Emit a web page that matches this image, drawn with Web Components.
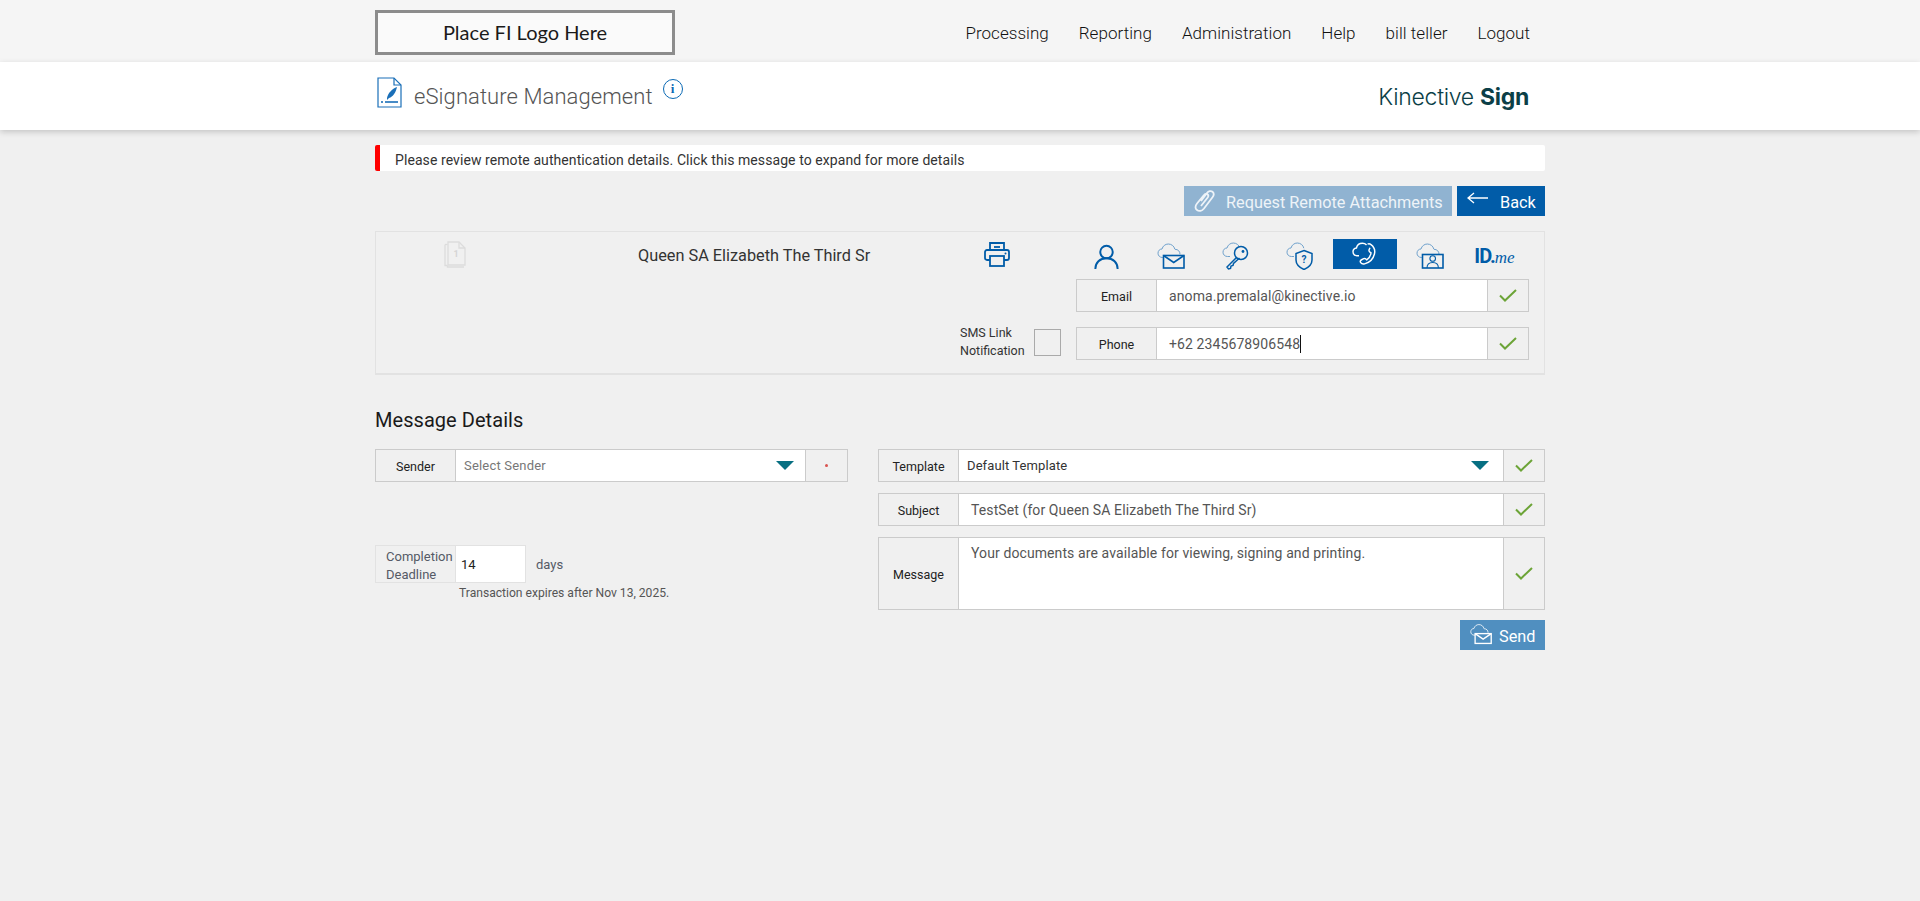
<!DOCTYPE html>
<html>
<head>
<meta charset="utf-8">
<title>eSignature Management</title>
<style>
  html, body { margin: 0; padding: 0; }
  body {
    background: #f0f0f0;
    font-family: Roboto, "Liberation Sans", sans-serif;
    min-height: 901px;
  }
  .wrap { width: 1170px; margin: 0 auto; }
</style>
</head>
<body>
<k-topbar>
  <span slot="logo">Place FI Logo Here</span>
  <a>Processing</a><a>Reporting</a><a>Administration</a><a>Help</a><a>bill teller</a><a>Logout</a>
</k-topbar>
<k-titlebar></k-titlebar>
<div class="wrap">
  <k-alert>Please review remote authentication details. Click this message to expand for more details</k-alert>
  <k-actions></k-actions>
  <k-signer-panel></k-signer-panel>
  <k-message-form></k-message-form>
</div>

<script>
const BLUE = '#015ca8';

const CLOUD = '<path d="M8 14.5H5.5C2.8 14.5 1 12.6 1 10.2 1 7.8 2.7 6 5 6 5.8 3 8.3 1 11.3 1c3.3 0 5.9 2.2 6.5 5.2" fill="none" stroke="var(--cloud, #6fa1cc)" stroke-width="1"/>';

const ICONS = {
  person: '<svg width="25" height="25" viewBox="0 0 28 28" fill="none" stroke="currentColor" stroke-width="2.200"><circle cx="14" cy="9" r="7"/><path d="M1.5 28c0-7 5-12 12.500-12s12.500 5 12.500 12"/></svg>',
  mail: `<svg width="28" height="26" viewBox="0 0 28 26" fill="none" stroke="currentColor" stroke-width="1.600">${CLOUD}<path d="M18 6.300c3 0 5 2 5 5" stroke="var(--cloud, #6fa1cc)" stroke-width="1"/><rect x="6.500" y="12.500" width="20.500" height="12.500" fill="var(--tab-bg, #f0f0f0)"/><path d="M6.500 12.500l10.200 7 10.300-7"/></svg>`,
  key: `<svg width="28" height="28" viewBox="0 0 28 28" fill="none" stroke="currentColor" stroke-width="1.500">${CLOUD}<circle cx="19" cy="11" r="6.500" fill="var(--tab-bg, #f0f0f0)"/><circle cx="21" cy="9.500" r="1.400" fill="currentColor" stroke="none"/><path d="M14.500 15.500L5 25l1.500 2 2-.5.5-2.500 2-.5.500-2 6-5.500"/></svg>`,
  shield: `<svg width="28" height="28" viewBox="0 0 28 28" fill="none" stroke="currentColor" stroke-width="1.500">${CLOUD}<path d="M18 8.500l8 3v6.500c0 4.500-3.500 7.500-8 9.500-4.500-2-8-5-8-9.500v-6.500z" fill="var(--tab-bg, #f0f0f0)"/><text x="18" y="21" text-anchor="middle" font-family="Roboto" font-weight="700" font-size="10" fill="currentColor" stroke="none">?</text></svg>`,
  phone: `<svg width="26" height="24" viewBox="0 0 30 28" fill="none" stroke="#fff" stroke-width="1.700"><path d="M8 16H5.500C2.800 16 1 14 1 11.500 1 9 2.700 7.300 5 7 5.800 3.500 8.800 1.500 12 1.500c2 0 3.600.7 4.800 1.900"/><path d="M18 2.500c1.500-.7 2.800-.4 4 .5 4 3 5 7 4 11-1.300 5.500-6 10-11.500 11.500-2 .5-3.500 0-4.500-1.500-1-1.300-.5-2.500 1-3.300l2.500-1.300c1-.5 1.800-.3 2.500.5l1 1c2.800-2 4.600-5 5-8.300l-1.500-1c-.8-.6-1-1.500-.7-2.500l1-2.300"/></svg>`,
  video: `<svg width="28" height="26" viewBox="0 0 28 26" fill="none" stroke="currentColor" stroke-width="1.600">${CLOUD}<path d="M18 6.300c3 0 5 2 5 5" stroke="var(--cloud, #6fa1cc)" stroke-width="1"/><rect x="6.500" y="11.500" width="20.500" height="13.500" fill="var(--tab-bg, #f0f0f0)"/><circle cx="16.700" cy="15.500" r="2.800" stroke-width="1.100"/><path d="M11 25c0-3.500 2.500-5.500 5.700-5.500s5.700 2 5.700 5.500" stroke-width="1.100"/></svg>`,
  printer: '<svg width="26" height="25" viewBox="0 0 26 25" fill="none" stroke="currentColor" stroke-width="1.800"><path d="M6 8V1h14v7"/><path d="M10 5h6"/><path d="M6 18H3c-1.200 0-2-.8-2-2V10c0-1.200.8-2 2-2h20c1.200 0 2 .8 2 2v6c0 1.200-.8 2-2 2h-3"/><rect x="6" y="14" width="14" height="10"/><circle cx="21.500" cy="11.500" r="1" fill="currentColor" stroke="none"/></svg>',
  check: '<svg width="18" height="13" viewBox="0 0 18 13" fill="none" stroke="#6ca437" stroke-width="2"><path d="M1 6.500l5 5L17 1"/></svg>',
  caret: '<svg width="18" height="9" viewBox="0 0 18 9"><path d="M0 0h18L9 9z" fill="#076f82"/></svg>'
};

class KTopbar extends HTMLElement {
  connectedCallback() {
    this.attachShadow({ mode: 'open' });
    this.shadowRoot.innerHTML = `
      <style>
        :host { display: block; background: #f5f5f5; height: 62px; }
        .in {
          width: 1170px; margin: 0 auto; height: 100%;
          display: flex; align-items: flex-start; justify-content: space-between;
        }
        .logo {
          box-sizing: border-box; width: 300px; height: 45px; margin-top: 10px; padding-bottom: 2px;
          border: 3px solid #8c8c8c; background: #fafafa;
          display: flex; align-items: center; justify-content: center;
          font: 400 20px Lato, sans-serif; color: #1a1a1a;
        }
        nav {
          display: flex; gap: 30px; padding: 23px 15px 0 0;
          font: 300 17px/20px Roboto, sans-serif; letter-spacing: .04px; color: #111;
        }
      </style>
      <div class="in">
        <div class="logo"><slot name="logo"></slot></div>
        <nav><slot></slot></nav>
      </div>`;
  }
}

class KTitlebar extends HTMLElement {
  connectedCallback() {
    this.attachShadow({ mode: 'open' });
    this.shadowRoot.innerHTML = `
      <style>
        :host {
          display: block; background: #fff; height: 68px;
          box-shadow: 0 2px 6px rgba(0,0,0,.18);
          position: relative;
        }
        .in { width: 1170px; margin: 0 auto; height: 100%; display: flex; }
        .doc { margin: 15px 0 0 2px; color: #1a6fb8; }
        h1 {
          margin: 20px 0 0 12px; font: 300 22px/30px Roboto, sans-serif; color: #555;
          letter-spacing: .08px;
        }
        .info {
          box-sizing: border-box; width: 20px; height: 20px; margin: 17px 0 0 10px;
          border: 1.500px solid #0a69b4; border-radius: 50%;
          font: 700 13px/17px "Liberation Serif", serif; color: #0a69b4; text-align: center;
        }
        .brand {
          margin: 19px 16px 0 auto; font: 300 23px/32px Inter, sans-serif; color: #0c3f47;
          letter-spacing: -.3px;
        }
        .brand b { font-weight: 700; }
      </style>
      <div class="in">
        <svg class="doc" width="25" height="31" viewBox="0 0 25 31" fill="none" stroke="currentColor" stroke-width="1.200">
          <path d="M1 1h16l7 7v22H1z"/><path d="M17 1v7h7"/>
          <path d="M10 21c1-5 5-9 10-11-1 5-4 10-8 11l-2 2z" fill="currentColor" stroke="none"/>
          <path d="M8 25h13" stroke-width="1.600"/><path d="M4 24l2 2m0-2l-2 2" stroke-width=".8"/>
        </svg>
        <h1>eSignature Management</h1>
        <div class="info">i</div>
        <div class="brand">Kinective <b>Sign</b></div>
      </div>`;
  }
}

class KAlert extends HTMLElement {
  connectedCallback() {
    this.attachShadow({ mode: 'open' });
    this.shadowRoot.innerHTML = `
      <style>
        :host {
          display: block; box-sizing: border-box; height: 26px; margin-top: 15px;
          background: #fff; border-left: 5px solid #f00; border-radius: 2px;
          padding-left: 15px;
          font: 400 14px/30px Roboto, sans-serif; color: #333; letter-spacing: .08px;
        }
      </style>
      <slot></slot>`;
  }
}

class KButton extends HTMLElement {
  connectedCallback() {
    this.attachShadow({ mode: 'open' });
    this.shadowRoot.innerHTML = `
      <style>
        :host {
          display: inline-flex; align-items: center; box-sizing: border-box;
          height: 30px; background: var(--bg, ${BLUE}); color: #fff;
          font: 400 16.300px/20px Roboto, sans-serif;
        }
        ::slotted(span) { padding-top: 4px; }
      </style>
      <slot></slot>`;
  }
}

class KActions extends HTMLElement {
  connectedCallback() {
    this.attachShadow({ mode: 'open' });
    this.shadowRoot.innerHTML = `
      <style>
        :host { display: flex; justify-content: flex-end; gap: 5px; margin-top: 15px; }
        .req { color: #eef3f8; }
      </style>
      <k-button class="req" style="--bg:#90b3d1;width:268px;padding-left:10px">
        <svg width="22" height="24" viewBox="0 0 22 24" fill="none" stroke="#eef3f8" stroke-width="1.800" style="flex:none">
          <path d="M7 12l6-8c1.500-2 4-2.500 5.500-1.200s1.500 3.500 0 5.500L10 19.500c-2 2.500-5 3-7 1.500s-2-4 0-6.500L10 6c1-1.300 2.500-1.500 3.500-.7s1 2.200 0 3.500L7 17"/>
        </svg>
        <span style="margin-left:10px">Request Remote Attachments</span>
      </k-button>
      <k-button style="width:88px;padding-left:10px">
        <svg width="22" height="12" viewBox="0 0 22 12" fill="none" stroke="#fff" stroke-width="1.300" style="flex:none;margin-top:-6px">
          <path d="M21 6H1M7 1L1 6l6 5"/>
        </svg>
        <span style="margin-left:11px">Back</span>
      </k-button>`;
  }
}

class KField extends HTMLElement {
  connectedCallback() {
    const end = this.getAttribute('end') || 'check';
    const endCell = end === 'req'
      ? '<i class="req"></i>'
      : ICONS.check;
    this.attachShadow({ mode: 'open' });
    this.shadowRoot.innerHTML = `
      <style>
        :host {
          display: flex; box-sizing: border-box; height: var(--h, 33px);
          border: 1px solid #cbcbcb; background: #f0f0f0;
          font: 400 13px/1 Roboto, sans-serif;
        }
        .lab {
          flex: none; width: var(--lab, 80px); box-sizing: border-box; padding-top: 3px;
          display: flex; align-items: center; justify-content: center;
          border-right: 1px solid #cbcbcb; color: #222; font-size: 12.500px;
        }
        .val {
          flex: 1; min-width: 0; background: #fff; display: flex;
          align-items: var(--val-align, center); padding: var(--val-pad, 0 12px);
          font-size: 14px; color: #555; letter-spacing: .1px;
        }
        .end {
          flex: none; width: var(--end, 41px); box-sizing: border-box;
          display: flex; align-items: center; justify-content: center;
          border-left: 1px solid #cbcbcb;
        }
        .req { width: 3px; height: 3px; border-radius: 50%; background: #d9534f; }
      </style>
      <div class="lab">${this.getAttribute('label')}</div>
      <div class="val"><slot></slot></div>
      <div class="end">${endCell}</div>`;
  }
}

class KSignerPanel extends HTMLElement {
  connectedCallback() {
    const tabs = ['person', 'mail', 'key', 'shield', 'phone', 'video'];
    this.attachShadow({ mode: 'open' });
    this.shadowRoot.innerHTML = `
      <style>
        :host {
          display: grid; grid-template-columns: 700px 453px; grid-template-rows: 40px 48px 33px;
          box-sizing: border-box; height: 144px; margin-top: 15px;
          border: 1px solid #e2e2e2; border-bottom-width: 2px; padding-top: 7px;
          font-family: Roboto, sans-serif;
        }
        .head { display: flex; align-items: flex-start; grid-row: 1; }
        .pages { margin: 2px 0 0 68px; flex: none; }
        .name {
          width: 232px; margin: 6px 0 0 172px; flex: none;
          font: 400 16.300px/22px Roboto, sans-serif; color: #333; white-space: nowrap;
        }
        .print { margin: 3px 0 0 114px; color: ${BLUE}; flex: none; }
        .tabs { display: flex; height: 30px; margin-left: -2px; grid-row: 1; }
        .tab {
          flex: 0 0 64.700px; display: flex; align-items: center; justify-content: center; color: ${BLUE};
        }
        .tab svg { margin-top: 4px; }
        .tab.person svg { margin-top: 5px; }
        .tab.on { background: ${BLUE}; flex: 0 0 64px; margin-right: .7px; }
        .tab.on svg { margin-top: 0; }
        .idme {
          font: 700 20px/30px Roboto, sans-serif; color: ${BLUE}; letter-spacing: -1px; padding-top: 3px;
        }
        .idme i { font: italic 400 17px "Liberation Serif", serif; letter-spacing: 0; }
        .row { grid-column: 2; --lab: 80px; --end: 41px; }
        .sms {
          grid-column: 1; grid-row: 3; display: flex; justify-content: flex-end; align-items: flex-start;
          padding-right: 15px;
        }
        .sms span { font: 400 12.500px/18px Roboto, sans-serif; color: #333; width: 74px; margin-top: -3px; }
        .box { width: 27px; height: 27px; box-sizing: border-box; border: 1px solid #aaa; margin-top: 2px; }
        .caret { display: inline-block; width: 1px; height: 18px; background: #111; flex: none; }
      </style>
      <div class="head">
        <svg class="pages" width="22" height="27" viewBox="0 0 22 27" fill="none" stroke="#dcdcdc" stroke-width="1.300">
          <path d="M3.500 24.500V26H20" /><path d="M1 3.500V24.500h2.500"/><path d="M1 3.500h2.500"/>
          <path d="M4 1h11l6 6v17H4z"/><path d="M15 1v6h6"/>
          <text x="12" y="16" text-anchor="middle" font-family="Roboto" font-weight="700" font-size="9" fill="#d5d5d5" stroke="none">1</text>
        </svg>
        <div class="name">Queen SA Elizabeth The Third Sr</div>
        <div class="print">${ICONS.printer}</div>
      </div>
      <div class="tabs">
        ${tabs.map(t => `<div class="tab ${t} ${t === 'phone' ? 'on' : ''}">${ICONS[t]}</div>`).join('')}
        <div class="tab idme"><span>ID.<i>me</i></span></div>
      </div>
      <k-field class="row" label="Email" style="grid-row:2;align-self:start">anoma.premalal@kinective.io</k-field>
      <div class="sms"><span>SMS Link Notification</span><div class="box"></div></div>
      <k-field class="row" label="Phone" style="grid-row:3"><span>+62 2345678906548</span><span class="caret"></span></k-field>`;
  }
}

class KMessageForm extends HTMLElement {
  connectedCallback() {
    this.attachShadow({ mode: 'open' });
    this.shadowRoot.innerHTML = `
      <style>
        :host { display: block; font-family: Roboto, sans-serif; }
        h2 { margin: 0; padding-top: 32px; font: 400 20px/26px Roboto, sans-serif; color: #1a1a1a; height: 42px; letter-spacing: .05px; }
        .cols { display: grid; grid-template-columns: 473px 667px; column-gap: 30px; }
        .right { display: flex; flex-direction: column; gap: 11px; }
        .sel { display: flex; align-items: center; width: 100%; }
        .sel svg { margin-left: auto; margin-right: 5px; }
        .ph { font-size: 13px; color: #777; letter-spacing: .2px; }
        .dt { font-size: 13px; color: #333; }
        .deadline { display: flex; margin-top: 63px; align-items: stretch; height: 38px; }
        .dl-lab {
          box-sizing: border-box; width: 81px; border: 1px solid #e2e2e2; padding: 2px 0 0 10px;
          font: 400 13px/18px Roboto, sans-serif; color: #555a66;
        }
        .dl-val {
          box-sizing: border-box; width: 70px; background: #fff; border: 1px solid #e2e2e2; border-left: 0;
          padding-left: 5px; font: 400 13px/38px Roboto, sans-serif; color: #222;
        }
        .days { font: 400 13px/40px Roboto, sans-serif; color: #555a66; margin-left: 10px; }
        .exp { margin: 2px 0 0 84px; font: 400 12.100px/16px Roboto, sans-serif; color: #555; }
      </style>
      <h2>Message Details</h2>
      <div class="cols">
        <div>
          <k-field label="Sender" end="req" style="--lab:80px;--end:42px;--val-pad:0 6px 0 8px">
            <div class="sel"><span class="ph">Select Sender</span>${ICONS.caret}</div>
          </k-field>
          <div class="deadline">
            <div class="dl-lab">Completion Deadline</div>
            <div class="dl-val">14</div>
            <div class="days">days</div>
          </div>
          <div class="exp">Transaction expires after Nov 13, 2025.</div>
        </div>
        <div class="right">
          <k-field label="Template" style="--val-pad:0 9px 0 8px">
            <div class="sel"><span class="dt">Default Template</span>${ICONS.caret}</div>
          </k-field>
          <k-field label="Subject" style="--val-pad:0 12px">TestSet (for Queen SA Elizabeth The Third Sr)</k-field>
          <k-field label="Message" style="--h:73px;--val-align:flex-start;--val-pad:8px 12px 0">Your documents are available for viewing, signing and printing.</k-field>
          <k-button style="--bg:#508fc0;align-self:flex-end;width:85px;padding-left:10px;margin-top:-1px">
            <svg width="22" height="22" viewBox="0 0 28 26" fill="none" stroke="#fff" stroke-width="1.700" style="flex:none;--cloud:#fff;margin-top:-3px">${CLOUD}<path d="M18 6.300c3 0 5 2 5 5" stroke="#fff" stroke-width="1"/><rect x="6.500" y="12.500" width="20.500" height="12.500" fill="#508fc0"/><path d="M6.500 12.500l10.200 7 10.300-7"/></svg>
            <span style="margin-left:7px">Send</span>
          </k-button>
        </div>
      </div>`;
  }
}

customElements.define('k-topbar', KTopbar);
customElements.define('k-titlebar', KTitlebar);
customElements.define('k-alert', KAlert);
customElements.define('k-button', KButton);
customElements.define('k-actions', KActions);
customElements.define('k-field', KField);
customElements.define('k-signer-panel', KSignerPanel);
customElements.define('k-message-form', KMessageForm);
</script>
</body>
</html>
